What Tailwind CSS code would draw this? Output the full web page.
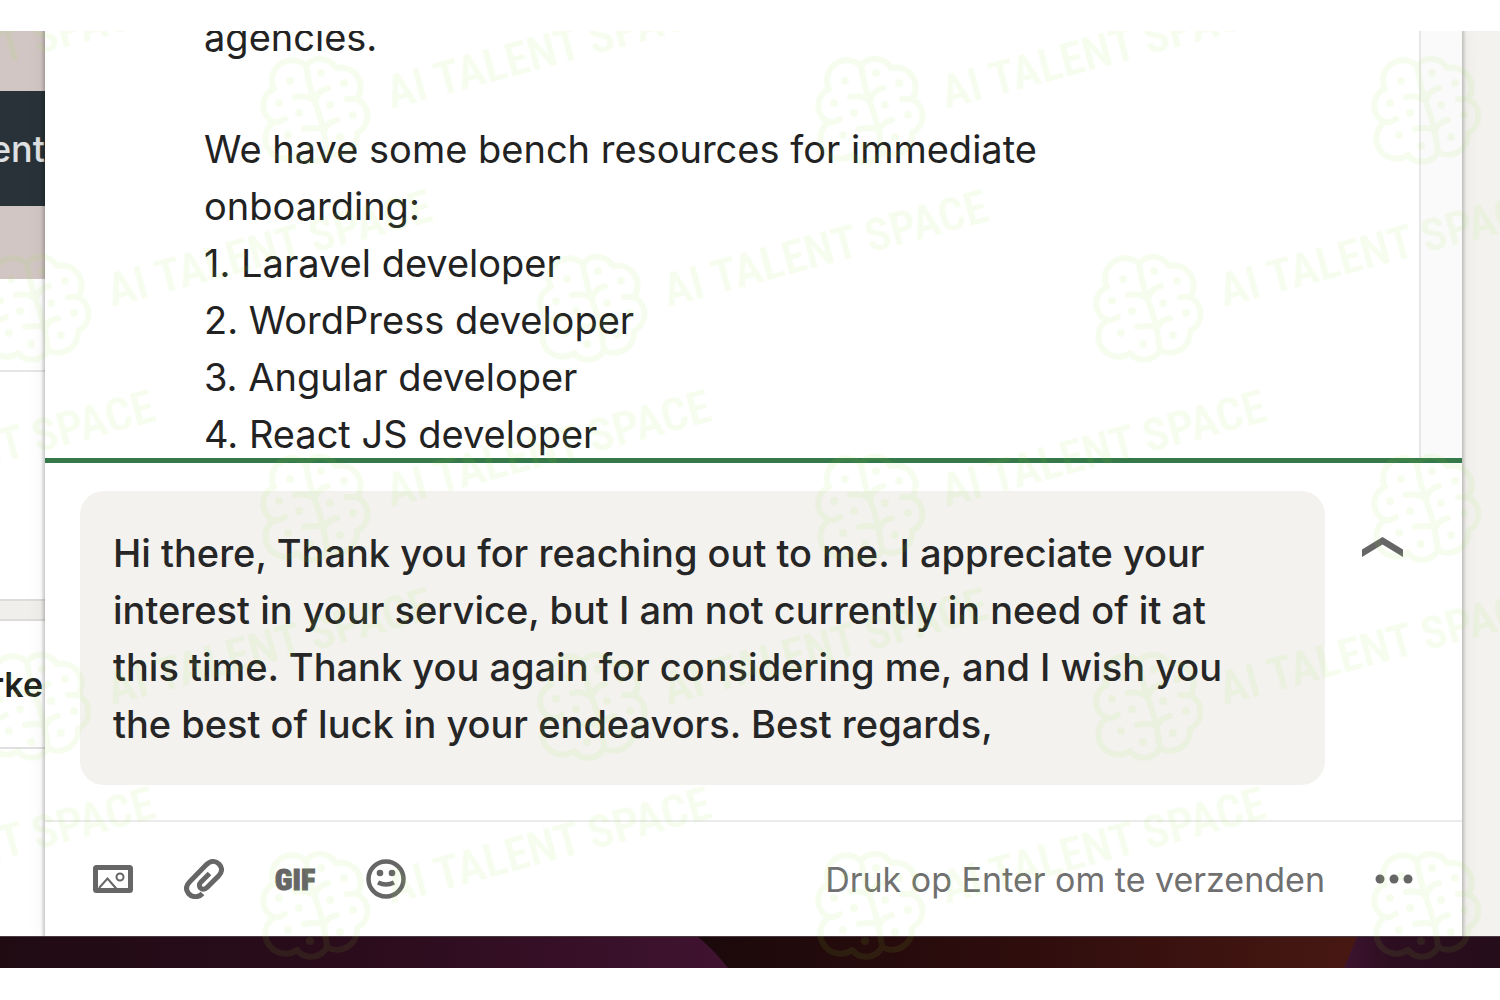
<!DOCTYPE html>
<html lang="nl">
<head>
  <meta charset="UTF-8">
  <meta name="viewport" content="width=device-width,initial-scale=1">
  <title>Berichten</title>
  <script src="https://cdn.jsdelivr.net/npm/@tailwindcss/browser@4"></script>
</head>
<body class="bg-white font-['Inter',sans-serif]">
  <div class="h-screen pt-[31px] pb-8">
    <div class="relative h-full flex flex-col overflow-hidden">
      <div class="flex-1 min-h-0 flex">

        <!-- page behind the chat, left edge -->
        <aside class="w-[45px] shrink-0 flex flex-col overflow-hidden bg-white">
          <div class="h-[248px] shrink-0 bg-[#d2c6c4] py-[60px]">
            <div class="h-[115px] flex items-center justify-end bg-[#283238] text-white/85 text-4xl font-medium">
              <span>ent</span>
            </div>
          </div>
          <div class="h-[93px] shrink-0 border-b-2 border-[#e6e6e6]"></div>
          <div class="h-[227px] shrink-0"></div>
          <div class="h-[22px] shrink-0 bg-[#f1efec] border-y-2 border-[#dddcda]"></div>
          <div class="h-[128px] shrink-0 border-b-2 border-[#e0e0e0] flex items-center justify-end pr-[2px] text-[#1f1f1f] text-[34px] font-semibold">
            <span>rke</span>
          </div>
        </aside>

        <!-- chat window -->
        <main class="relative flex-1 min-w-0 flex flex-col bg-white shadow-[0_0_3px_2px_rgba(0,0,0,0.2),0_0_18px_rgba(0,0,0,0.07)]">
          <div class="flex-1 min-h-0 flex overflow-hidden">
            <div class="flex-1 overflow-hidden pl-[159px] text-[38px] leading-[57px] text-[#222]">
              <p class="-mt-[22px] mb-[55px]">agencies.</p>
              <p>We have some bench resources for immediate<br>onboarding:</p>
              <p>1. Laravel developer</p>
              <p>2. WordPress developer</p>
              <p>3. Angular developer</p>
              <p>4. React JS developer</p>
            </div>
            <div class="w-[43px] bg-[#fafafa] border-l-2 border-[#e7e7e7]"></div>
          </div>

          <form class="border-t-[5px] border-[#35784a]">
            <div class="flex items-start pl-[35px] pt-7 pb-[35px]">
              <textarea aria-label="Bericht" rows="4" class="flex-1 h-[294px] resize-none overflow-hidden rounded-3xl bg-[#f3f2ef] pl-[33px] pr-[60px] pt-[34px] text-[38px] leading-[57px] font-medium text-[#262626] outline-none">Hi there, Thank you for reaching out to me. I appreciate your interest in your service, but I am not currently in need of it at this time. Thank you again for considering me, and I wish you the best of luck in your endeavors. Best regards,</textarea>
              <button type="button" aria-label="Uitklappen" class="ml-[37px] mr-[59px] mt-[46px]">
                <svg class="block w-[41px] h-5" viewBox="0 0 41 20" fill="#666"><path d="M20.500 0 41 12.500V20L20.500 7.500 0 20v-7.500z"/></svg>
              </button>
            </div>

            <div class="h-[116px] border-t-2 border-[#ebebeb] flex items-center pl-12 pr-[49px] text-[#666]">
              <div class="flex items-center gap-[51px]">
                <button type="button" aria-label="Afbeelding">
                  <svg class="block size-10" viewBox="0 0 40 40" fill="none" stroke="currentColor">
                    <rect x="2.500" y="8.500" width="35" height="23" rx="1" stroke-width="5"/>
                    <path d="M6 29 14.500 19.500 24.500 31" stroke-width="2"/>
                    <circle cx="27" cy="18" r="3.500" stroke-width="2"/>
                  </svg>
                </button>
                <button type="button" aria-label="Bijlage">
                  <svg class="block size-10" viewBox="0 0 40 40" fill="none" stroke="currentColor" stroke-width="5">
                    <path d="M18.500 34.500C14 39.500 7.500 38 4.500 34.500C1.500 30.500 2 26.500 5.500 23L22 6C26.500 1.500 31.500 1.500 35 5C38.500 8.500 38.500 13 34.500 17L23 28.500C20.500 31 18 30.500 16.500 29C15 27.500 15 25 17 23L25.500 14.500"/>
                  </svg>
                </button>
                <button type="button" aria-label="GIF">
                  <svg class="block size-10 overflow-visible" viewBox="0 0 40 40">
                    <text x="20" y="31" text-anchor="middle" class="font-['Roboto_Condensed','Roboto',sans-serif] font-black text-[30px]" fill="currentColor" stroke="currentColor">GIF</text>
                  </svg>
                </button>
                <button type="button" aria-label="Emoji">
                  <svg class="block size-10" viewBox="0 0 40 40" fill="currentColor">
                    <circle cx="20" cy="20" r="17.500" fill="none" stroke="currentColor" stroke-width="4.500"/>
                    <circle cx="14" cy="14" r="3.300"/><circle cx="26" cy="14" r="3.300"/>
                    <path d="M12 23.500Q20 27.500 28 23.500" fill="none" stroke="currentColor" stroke-width="4.500"/>
                  </svg>
                </button>
              </div>
              <span class="ml-auto text-[34px] text-[#707070]">Druk op Enter om te verzenden</span>
              <button type="button" aria-label="Meer opties" class="ml-[50px]">
                <svg class="block w-[38px] h-3" viewBox="0 0 38 12" fill="currentColor"><circle cx="5" cy="6" r="4.500"/><circle cx="19" cy="6" r="4.500"/><circle cx="33" cy="6" r="4.500"/></svg>
              </button>
            </div>
          </form>
        </main>

        <div class="w-[38px] shrink-0 bg-[#f3f2ef]"></div>
      </div>

      <!-- desktop wallpaper -->
      <svg class="relative block w-full h-8 shrink-0 border-t border-[#4a3a42]" viewBox="0 0 1500 31" preserveAspectRatio="none">
        <defs>
          <linearGradient id="wall-l"><stop offset="0" stop-color="#200b13"/><stop offset="0.500" stop-color="#2b0c1c"/><stop offset="1" stop-color="#401330"/></linearGradient>
          <linearGradient id="wall-m" gradientUnits="userSpaceOnUse" x1="700" x2="1350" y1="0" y2="0"><stop offset="0" stop-color="#1b090b"/><stop offset="0.500" stop-color="#2f0d0d"/><stop offset="1" stop-color="#471812"/></linearGradient>
          <linearGradient id="wall-r"><stop offset="0" stop-color="#3d1430"/><stop offset="0.300" stop-color="#2c0e20"/><stop offset="1" stop-color="#260d1a"/></linearGradient>
        </defs>
        <rect width="1500" height="31" fill="url(#wall-m)"/>
        <path d="M0 0H698Q715 14 728 31H0z" fill="url(#wall-l)"/>
        <path d="M1357 0H1500V31H1344z" fill="url(#wall-r)"/>
      </svg>

      <!-- watermark -->
      <svg class="absolute top-0 left-0 w-[1500px] h-[937px] pointer-events-none" viewBox="0 31 1500 937" aria-hidden="true">
        <defs>
          <g id="mark" fill="none" stroke="#9be83c" stroke-width="6" stroke-linecap="round" stroke-linejoin="round">
            <path d="M-9 -43A18 18 0 0 1 21 -41A20 20 0 0 1 42 -10A19 19 0 0 1 42 24A20 20 0 0 1 12 43A18 18 0 0 1 -18 46A20 20 0 0 1 -41 13A18 18 0 0 1 -41 -20A20 20 0 0 1 -9 -43z"/>
            <path d="M-9 -43Q-5 -18 1 -4Q8 14 12 42"/>
            <path d="M-20 -12Q-11 -14 -3 -10M-11 20Q-2 18 7 20M13 -21Q2 -18 0 -8M22 11Q12 13 9 22M-41 13Q-36 14 -30 10M32 -10H42"/>
            <g fill="#9be83c" stroke="none">
              <circle cx="-25" cy="-28" r="4"/><circle cx="6" cy="-36" r="4"/><circle cx="29" cy="-26" r="4"/><circle cx="-36" cy="-6" r="4"/><circle cx="-16" cy="4" r="4"/><circle cx="15" cy="-4" r="4"/><circle cx="38" cy="6" r="4"/><circle cx="-27" cy="26" r="4"/><circle cx="-5" cy="37" r="4"/><circle cx="25" cy="28" r="4"/>
            </g>
            <text transform="translate(76 0) rotate(-15)" class="font-['Roboto_Condensed','Roboto',sans-serif] font-semibold text-[47px]" fill="#9be83c" stroke="none">AI TALENT SPACE</text>
          </g>
        </defs>
        <g opacity="0.090">
          <use href="#mark" x="-241" y="109"/><use href="#mark" x="315" y="109"/><use href="#mark" x="870" y="109"/><use href="#mark" x="1426" y="109"/>
          <use href="#mark" x="36" y="307"/><use href="#mark" x="592" y="307"/><use href="#mark" x="1148" y="307"/>
          <use href="#mark" x="-241" y="507"/><use href="#mark" x="315" y="507"/><use href="#mark" x="870" y="507"/><use href="#mark" x="1426" y="507"/>
          <use href="#mark" x="36" y="705"/><use href="#mark" x="592" y="705"/><use href="#mark" x="1148" y="705"/>
          <use href="#mark" x="-241" y="904"/><use href="#mark" x="315" y="904"/><use href="#mark" x="870" y="904"/><use href="#mark" x="1426" y="904"/>
        </g>
      </svg>
    </div>
  </div>
</body>
</html>
